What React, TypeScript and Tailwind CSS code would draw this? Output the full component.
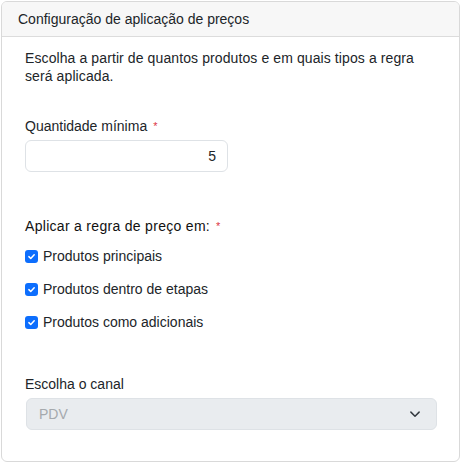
import React from 'react';

const font = { fontFamily: '"Liberation Sans", Arial, sans-serif' };

// caixa marcada no estilo bootstrap
const Check = () => (
  <span className="flex h-[13px] w-[13px] shrink-0 items-center justify-center rounded-[3px] bg-[#0d6efd]">
    <svg width="9" height="9" viewBox="0 0 12 12" fill="none">
      <path d="M2.5 6.2 5 8.6 9.6 3.6" stroke="white" strokeWidth="2" strokeLinecap="round" strokeLinejoin="round" />
    </svg>
  </span>
);

const Required = () => <span className="ml-[6px] text-[11px] leading-none text-[#dc3545]">*</span>;

const TIPOS = ['Produtos principais', 'Produtos dentro de etapas', 'Produtos como adicionais'];

export default function App() {
  return (
    <div className="bg-white pl-px pt-px text-[#212529]" style={font}>
      <div className="flex h-[461px] w-[459px] flex-col overflow-hidden rounded-[6px] border border-[#d9d9d9]">
        <div className="flex h-[35px] items-center border-b border-[#dcdcdc] bg-[#f7f7f7] px-[16px] text-[14px]">
          Configuração de aplicação de preços
        </div>
        <div className="flex flex-col pl-[23px] pt-[12px] text-[14px] leading-[18px]">
          <p className="w-[410px] tracking-[0.1px]">Escolha a partir de quantos produtos e em quais tipos a regra será aplicada.</p>

          <label className="mt-[32px] flex items-center">
            Quantidade mínima
            <Required />
          </label>
          <div className="mt-[5px] flex h-[32px] w-[203px] items-center justify-end rounded-[6px] border border-[#dee2e6] pr-[11px]">
            5
          </div>

          <div className="mt-[45px] flex items-center tracking-[0.3px] text-[#111]">
            Aplicar a regra de preço em:
            <Required />
          </div>
          <div className="mt-[12px] flex flex-col gap-[15px]">
            {TIPOS.map((t) => (
              <div key={t} className="flex h-[18px] items-center gap-[5px]">
                <Check />
                <span>{t}</span>
              </div>
            ))}
          </div>

          <label className="mt-[44px]">Escolha o canal</label>
          <div className="ml-px mt-[5px] flex h-[32px] w-[411px] items-center justify-between rounded-[6px] border border-[#dee2e6] bg-[#e9ecef] pl-[12px] pr-[15px] text-[#a5a9ad]">
            <span>PDV</span>
            <svg width="12" height="12" viewBox="0 0 16 16" fill="none">
              <path d="M2.5 5.5 8 11l5.5-5.5" stroke="#343a40" strokeWidth="2" strokeLinecap="round" strokeLinejoin="round" />
            </svg>
          </div>
        </div>
      </div>
    </div>
  );
}
